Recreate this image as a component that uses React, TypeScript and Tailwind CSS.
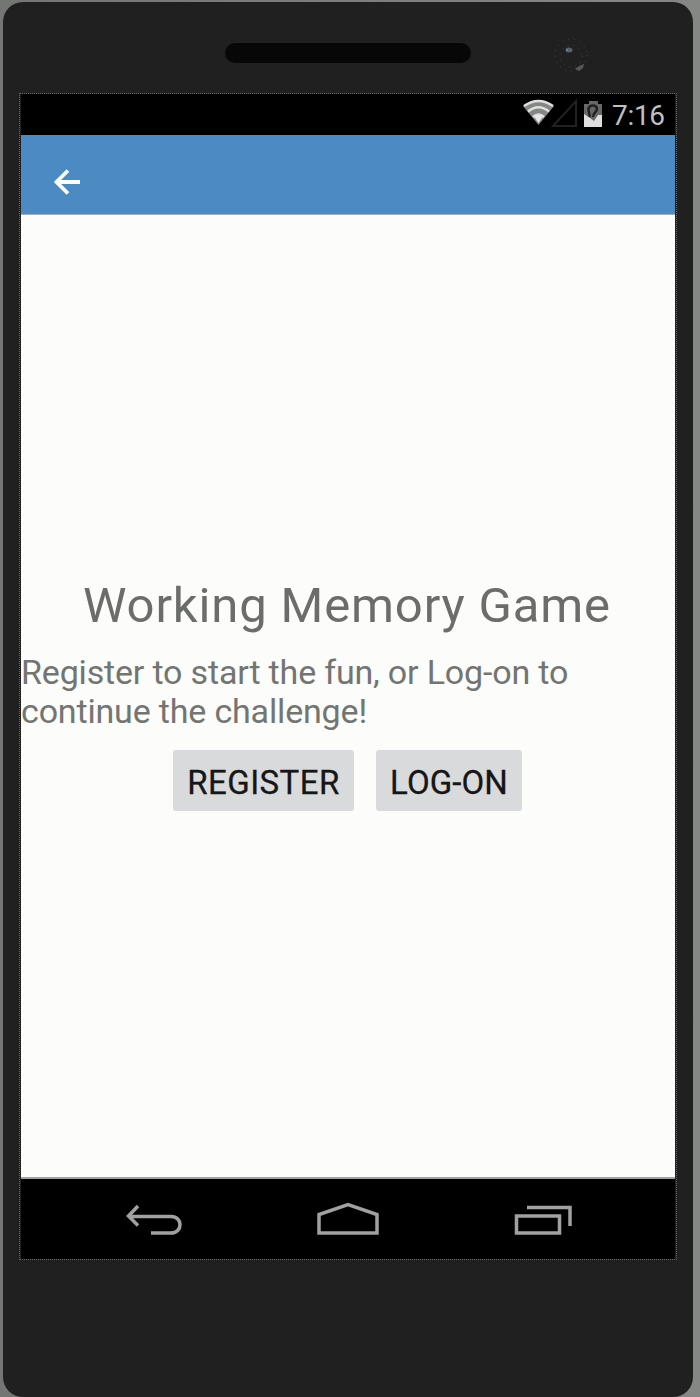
import React from 'react';

function StatusBar() {
  return (
    <div className="flex h-[41px] items-center justify-end bg-black pr-[11px]">
      <svg width="84" height="41" viewBox="522 94 84 41" aria-hidden="true">
        <path d="M523 106Q538.500 94.500 554 106L538.500 125Z" fill="#858785" />
        <path d="M524 106Q538.500 96 553 106M528 111.500Q538.500 103 549 111.500M533 117Q538.500 112 544 117" fill="none" stroke="#dedfde" strokeWidth="2.400" />
        <path d="M534 116.500Q538.500 113 543 116.500L538.500 123Z" fill="#e5e6e5" />
        <path d="M576 101V126H553Z" fill="none" stroke="#222222" strokeWidth="2" />
        <path d="M589 101H598V104H602V127H584V104H589Z" fill="#666866" />
        <path d="M589.500 117C590 113 588 112 588.500 108.500C590 104 597 105 597 109C597 112 592.500 113 593 117" fill="none" stroke="#202020" strokeWidth="2.500" />
        <path d="M584 114L590 118L594 121L598 115H602V127H584Z" fill="#dedfde" />
      </svg>
      <span className="ml-[6px] w-[52px] whitespace-nowrap pt-[2px] text-[28px] leading-none tracking-[-0.3px] text-[#bfc1bf]">7:16</span>
    </div>
  );
}

function AppBar() {
  return (
    <header className="flex h-[80px] items-center border-b border-[#a8b0b5] bg-[#4b8ac3] pl-[30px] pt-[14px]">
      <button aria-label="Back">
        <svg width="32" height="32" viewBox="0 0 32 32" fill="none" stroke="#fcfcfa" strokeWidth="3.800">
          <path d="M17 4.500L5.500 16L17 27.500M5 16H29" />
        </svg>
      </button>
    </header>
  );
}

function NavigationBar() {
  return (
    <nav className="h-[80px] bg-black">
      <svg width="654" height="80" viewBox="21 1179 654 80" fill="none" stroke="#a0a2a0" strokeWidth="3.500">
        <path d="M138 1206L128.500 1216L138 1225.500M129 1216.500H171C183 1216.500 183 1233 171 1233H151" />
        <path d="M319 1233V1214.500L348 1204.500L377 1214.500V1233Z" />
        <path d="M516.500 1216H559.500V1233H516.500ZM527 1207.500H570V1226" />
      </svg>
    </nav>
  );
}

export default function App() {
  return (
    <div className="h-[1397px] w-[700px] overflow-hidden bg-linear-to-r from-[#747674] to-[#858785] pl-[3px] pt-[2px] font-[Roboto,sans-serif]">
      <div className="h-[1395px] w-[690px] rounded-[20px] bg-[#202020] px-[16px] pb-[136px]">
        <div className="flex h-[91px] pl-[206px] pt-[41px]">
          <div className="h-[20px] w-[246px] rounded-full bg-[#070707]" />
          <svg className="ml-[80px] mt-[-10px]" width="44" height="42" viewBox="0 0 44 42" aria-hidden="true">
            <circle cx="20" cy="22" r="16" fill="none" stroke="#484848" strokeWidth="1" strokeDasharray="1 5" />
            <circle cx="20" cy="23" r="11" fill="none" stroke="#444444" strokeWidth="1" strokeDasharray="1 5" />
            <ellipse cx="18" cy="17" rx="3.500" ry="2.500" fill="#596068" />
            <path d="M24 36L28 33L33 31L32 35L28 38Z" fill="#565856" />
            <circle cx="16" cy="17" r="1" fill="#5b8bb8" />
          </svg>
        </div>
        <div className="w-[658px] border border-dotted border-[#666866] pl-px pt-0">
          <div className="w-[654px]">
            <StatusBar />
            <AppBar />
            <main className="flex h-[964px] flex-col border-b-2 border-[#a0a2a0] bg-[#fcfcfa] pt-[362px] text-[#6b6d6b]">
              <h1 className="ml-[62px] whitespace-nowrap text-[49px] font-normal leading-[58px] tracking-[0.85px]">Working Memory Game</h1>
              <p className="mt-[18px] whitespace-nowrap text-[34px] leading-[39px] tracking-[-0.17px] text-[#737573]">
                Register to start the fun, or Log-on to<br />continue the challenge!
              </p>
              <div className="ml-[152px] mt-[19px] flex gap-[22px] text-[33px] leading-none text-[#161616]">
                <button className="h-[61px] w-[181px] rounded-[3px] bg-[#d9dadc] pt-[3px] tracking-[0.45px] [-webkit-text-stroke:0.3px_#161616]">REGISTER</button>
                <button className="h-[61px] w-[146px] rounded-[3px] bg-[#d9dadc] pt-[3px] tracking-[0.1px] [-webkit-text-stroke:0.3px_#161616]">LOG-ON</button>
              </div>
            </main>
            <NavigationBar />
          </div>
        </div>
      </div>
    </div>
  );
}
